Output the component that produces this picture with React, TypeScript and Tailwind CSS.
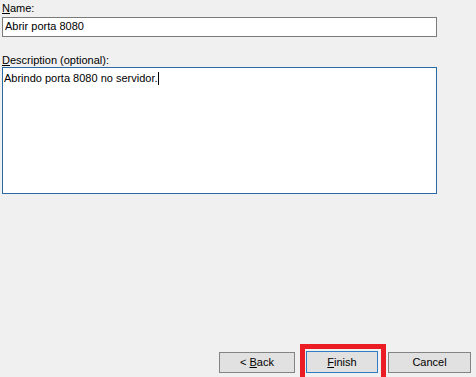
const font = "font-['Liberation_Sans',Arial,sans-serif]";

const Mnemonic = ({ ch }: { ch: string }) => <span className="underline underline-offset-[1px]">{ch}</span>;

export default function App() {
  return (
    <div className={`${font} text-[11px] leading-[13px] text-black bg-[#f0f0f0] h-[377px] w-full flex flex-col overflow-hidden`}>
      <div className="px-[2px] pt-[2px]">
        <div className="h-[13px]">
          <Mnemonic ch="N" />ame:
        </div>
        <div className="mt-[2px] w-[435px] h-[20px] bg-white border border-[#7a7a7a] pl-[2px] pt-[2px]">
          Abrir porta 8080
        </div>
        <div className="mt-[17px] h-[13px]">
          <Mnemonic ch="D" />escription (optional):
        </div>
        <div className="w-[435px] h-[127px] bg-white border border-[#2b6aa3] pl-[1px] pt-[4px]">
          Abrindo porta 8080 no servidor.
          <span className="inline-block w-[1px] h-[13px] bg-black align-[-3px]" />
        </div>
      </div>

      <div className="mt-auto flex justify-end items-start pr-[5px] h-[33px]">
        <button className="mt-[8px] mr-[5px] w-[76px] h-[21px] bg-[#e1e1e1] border border-[#848484] flex items-center justify-center">
          <span>
            &lt; <Mnemonic ch="B" />ack
          </span>
        </button>
        <div className="w-[86px] h-[33px] border-[5px] border-b-0 border-[#ec1c24] pl-[1px] pt-[2px]">
          <button className="w-[72px] h-[22px] bg-[#e1e1e1] border border-[#2f7dc4] flex items-center justify-center">
            <span>
              <Mnemonic ch="F" />inish
            </span>
          </button>
        </div>
        <button className="mt-[8px] ml-[2px] w-[83px] h-[21px] bg-[#e1e1e1] border border-[#848484] flex items-center justify-center">
          Cancel
        </button>
      </div>
    </div>
  );
}
